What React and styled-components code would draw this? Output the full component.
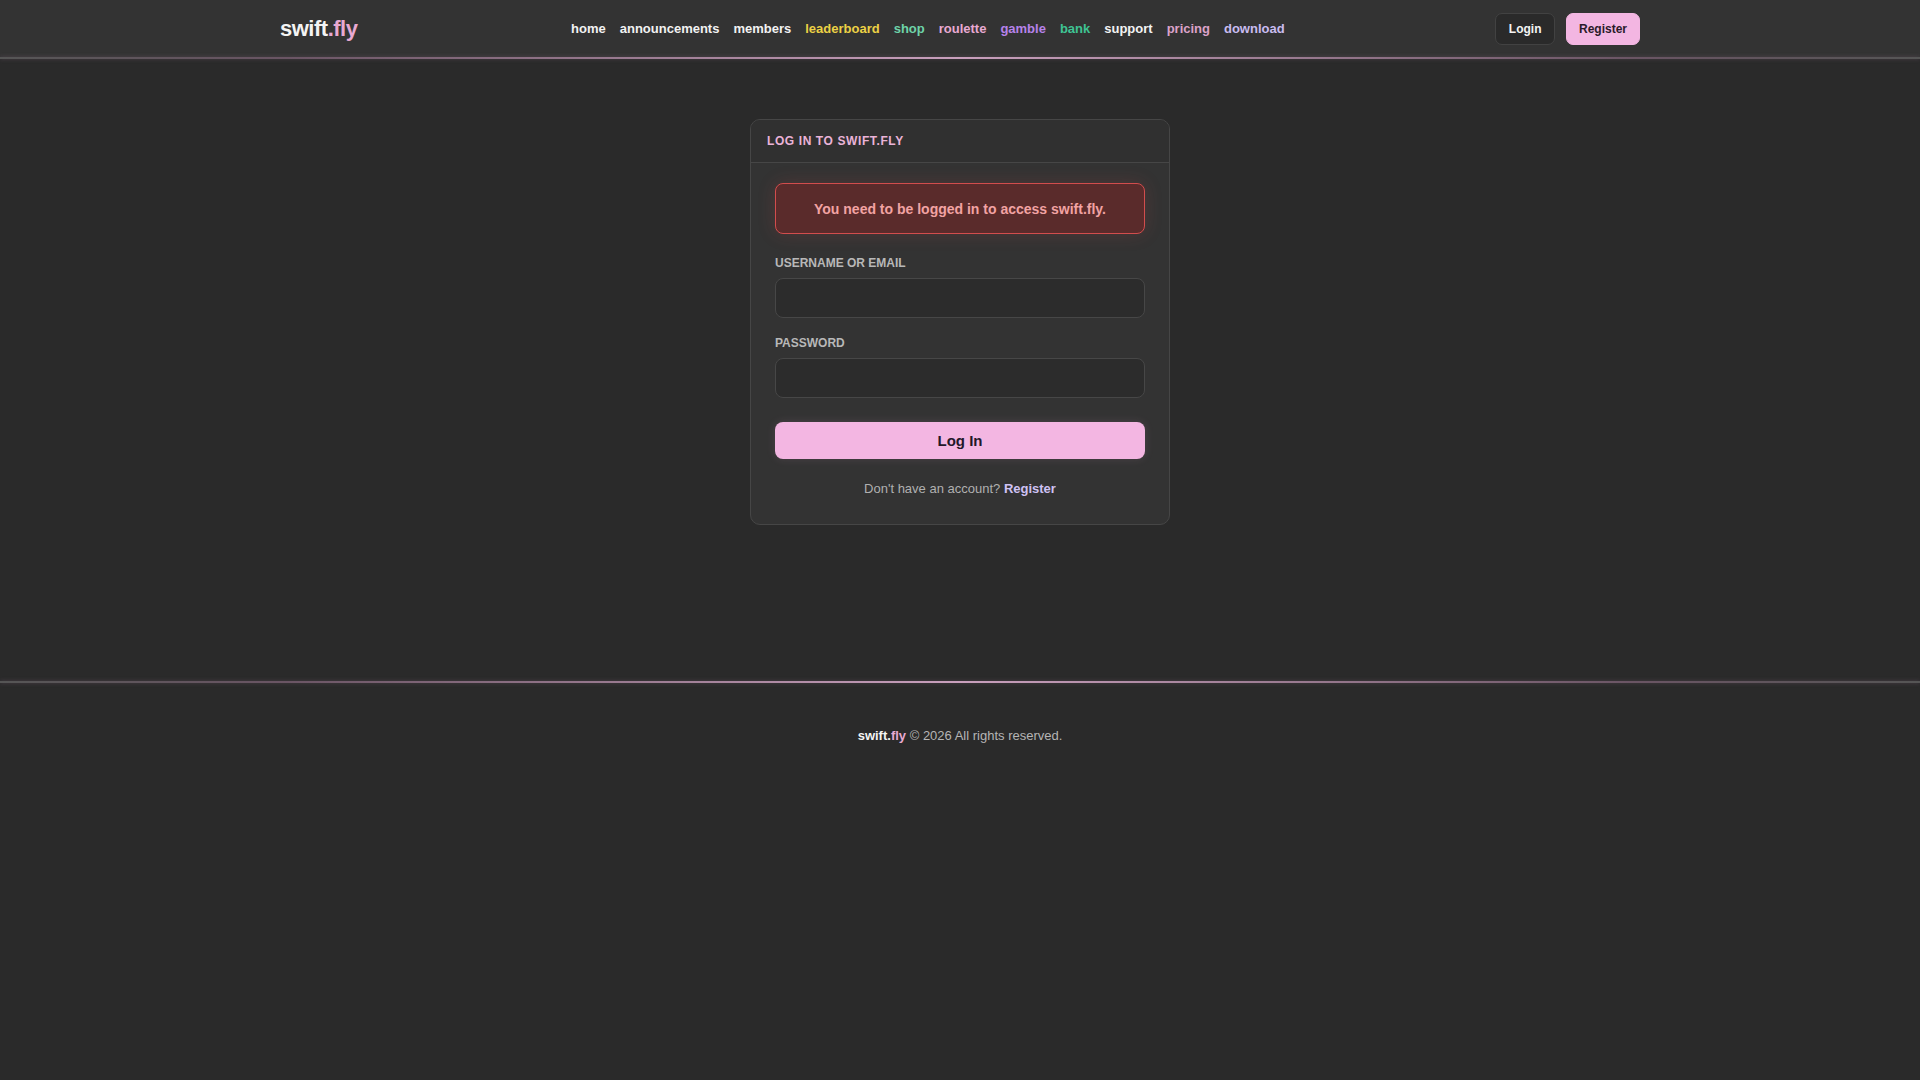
import React from "react";
import styled, { createGlobalStyle } from "styled-components";

const GlobalStyle = createGlobalStyle`
  html, body {
    margin: 0;
    padding: 0;
    background: #2a2a2a;
    font-family: "Liberation Sans", Arial, sans-serif;
    color: #e8e8e8;
  }
  * { box-sizing: border-box; }
`;

const navLinks = [
  { label: "home", color: "#f2f2f2" },
  { label: "announcements", color: "#f2f2f2" },
  { label: "members", color: "#f2f2f2" },
  { label: "leaderboard", color: "#ecd145" },
  { label: "shop", color: "#6ed3a9" },
  { label: "roulette", color: "#e8a9d2" },
  { label: "gamble", color: "#b682ea" },
  { label: "bank", color: "#3fc393" },
  { label: "support", color: "#f2f2f2" },
  { label: "pricing", color: "#dca2c9" },
  { label: "download", color: "#c9bcf0" },
];

export default function App() {
  return (
    <Page>
      <GlobalStyle />
      <Header>
        <HeaderInner>
          <Logo>
            swift<Dot>.fly</Dot>
          </Logo>
          <Nav>
            {navLinks.map((l) => (
              <NavLink key={l.label} color={l.color} href="#">
                {l.label}
              </NavLink>
            ))}
          </Nav>
          <Actions>
            <GhostButton>Login</GhostButton>
            <PinkButton>Register</PinkButton>
          </Actions>
        </HeaderInner>
      </Header>
      <GlowLine />

      <Main>
        <Card>
          <CardHeader>Log in to swift.fly</CardHeader>
          <CardBody>
            <ErrorBox>You need to be logged in to access swift.fly.</ErrorBox>
            <Field>
              <Label>Username or Email</Label>
              <Input type="text" />
            </Field>
            <Field>
              <Label>Password</Label>
              <Input type="password" />
            </Field>
            <SubmitButton>Log In</SubmitButton>
            <Hint>
              Don't have an account? <HintLink href="#">Register</HintLink>
            </Hint>
          </CardBody>
        </Card>
      </Main>

      <GlowLine />
      <Footer>
        <FooterBrand>
          swift.<Dot>fly</Dot>
        </FooterBrand>{" "}
        © 2026 All rights reserved.
      </Footer>
    </Page>
  );
}

const Page = styled.div`
  min-height: 100vh;
  display: flex;
  flex-direction: column;
`;

const Header = styled.header`
  background: #333333;
  height: 57px;
`;

const HeaderInner = styled.div`
  width: 1360px;
  height: 100%;
  margin: 0 auto;
  display: flex;
  align-items: center;
`;

const Logo = styled.div`
  font-size: 22px;
  font-weight: 700;
  letter-spacing: -0.5px;
  color: #f4f4f4;
`;

const Dot = styled.span`
  color: #e8a9d2;
`;

const Nav = styled.nav`
  flex: 1;
  display: flex;
  justify-content: center;
  gap: 14px;
  padding-left: 3px;
`;

const NavLink = styled.a`
  font-size: 13px;
  font-weight: 700;
  text-decoration: none;
  color: ${(p) => p.color};
`;

const Actions = styled.div`
  display: flex;
  gap: 11px;
`;

const GhostButton = styled.button`
  height: 32px;
  padding: 0 12.5px;
  border-radius: 7px;
  border: 1px solid #424242;
  background: #2a2a2a;
  color: #f4f4f4;
  font-family: inherit;
  font-size: 12px;
  font-weight: 700;
`;

const PinkButton = styled(GhostButton)`
  padding: 0 12px;
  border-color: #f3b6e2;
  background: #f3b6e2;
  color: #2a1b2a;
`;

const GlowLine = styled.div`
  height: 2px;
  background: linear-gradient(
    90deg,
    #555 0%,
    #6a5564 15%,
    #c9a0bd 50%,
    #6a5564 85%,
    #555 100%
  );
  box-shadow: 0 0 4px rgba(200, 150, 190, 0.25);
`;

const Main = styled.main`
  height: 622px;
  padding-top: 60px;
  display: flex;
  justify-content: center;
  align-items: flex-start;
`;

const Card = styled.section`
  width: 420px;
  background: #333333;
  border: 1px solid #464646;
  border-radius: 10px;
  overflow: hidden;
`;

const CardHeader = styled.div`
  height: 43px;
  padding: 0 16px;
  display: flex;
  align-items: center;
  border-bottom: 1px solid #464646;
  background: #303030;
  font-size: 12px;
  font-weight: 700;
  letter-spacing: 0.6px;
  text-transform: uppercase;
  color: #eab3d8;
`;

const CardBody = styled.div`
  padding: 20px 24px 24px;
  display: flex;
  flex-direction: column;
`;

const ErrorBox = styled.div`
  height: 51px;
  display: flex;
  align-items: center;
  justify-content: center;
  border: 1px solid #d24d4d;
  border-radius: 8px;
  background: #5a2b2b;
  box-shadow: 0 0 18px rgba(210, 70, 70, 0.18);
  color: #f2a3a3;
  font-size: 14px;
  font-weight: 700;
  margin-bottom: 22px;
`;

const Field = styled.div`
  display: flex;
  flex-direction: column;
  gap: 8px;
  margin-bottom: 18px;
`;

const Label = styled.label`
  font-size: 12px;
  font-weight: 700;
  text-transform: uppercase;
  color: #b8b8b8;
`;

const Input = styled.input`
  height: 40px;
  border-radius: 8px;
  border: 1px solid #474747;
  background: #2c2c2c;
  color: #eee;
  padding: 0 12px;
  font-family: inherit;
  font-size: 14px;
  outline: none;
`;

const SubmitButton = styled.button`
  height: 37px;
  margin-top: 6px;
  border: none;
  border-radius: 8px;
  background: #f3b6e2;
  color: #23182a;
  font-family: inherit;
  font-size: 15px;
  font-weight: 700;
  box-shadow: 0 0 10px rgba(243, 182, 226, 0.12);
`;

const Hint = styled.p`
  margin: 22px 0 4px;
  text-align: center;
  font-size: 13px;
  color: #b0b0b0;
`;

const HintLink = styled.a`
  color: #cfc2f3;
  font-weight: 700;
  text-decoration: none;
`;

const Footer = styled.footer`
  padding: 45px 0 0;
  text-align: center;
  font-size: 13px;
  color: #b5b5b5;
`;

const FooterBrand = styled.strong`
  color: #f4f4f4;
`;
